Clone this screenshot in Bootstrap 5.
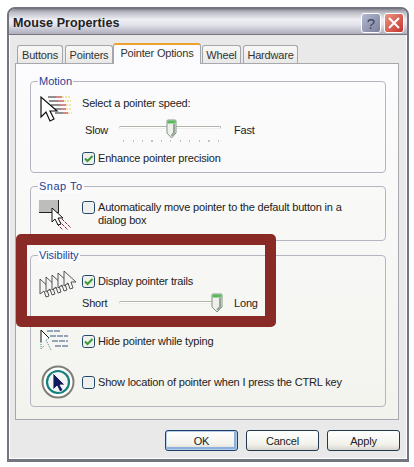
<!DOCTYPE html>
<html lang="en">
<head>
<meta charset="utf-8">
<title>Mouse Properties</title>
<link href="https://cdn.jsdelivr.net/npm/bootstrap@5.3.0/dist/css/bootstrap.min.css" rel="stylesheet">
<style>
html,body{background:#fff;margin:0;height:467px;overflow:hidden}
body{font-family:"Liberation Sans",Arial,sans-serif;font-size:11px;letter-spacing:-.18px;line-height:13px;color:#222;padding:7px 0 0 7px}
.win{position:relative;width:402px;height:455px;border:2px solid #72747e;border-bottom-width:3px;border-radius:8px 8px 0 0;background:#e9e9ea;box-shadow:inset 0 0 0 1px #fff}
.ttl{height:26px;padding:3px 3px 0 4px;background:linear-gradient(#85858f,#b9b9c4 12%,#eeeef3 42%,#e6e6ee 60%,#aeaebe);border-bottom:1px solid #77777f;border-radius:6px 6px 0 0;font-weight:700;font-size:12.5px;letter-spacing:.1px;color:#222}
.tb{width:20px;height:20px;border-radius:3px;border:1px solid #fff;margin-left:3px;display:flex;align-items:center;justify-content:center}
.tb-h{background:linear-gradient(135deg,#b5bad2,#7a7f9c);color:#3f4155;font-size:15px;font-weight:400}
.tb-c{background:linear-gradient(135deg,#e89482,#c9332c)}
.tabsx{height:28px;margin:0 0 0 6px;padding-left:2px;list-style:none}
.tabx{height:18px;padding:3px 0 0;text-align:center;background:linear-gradient(#f8f8f6,#e8e8e6);border:1px solid #a3a6ac;border-bottom:0;border-radius:3px 3px 0 0;margin-right:2px;color:#333}
.tabx-on{height:21px;padding-top:2px;background:#fbfbfd;border-top:2px solid #eba32d;margin-right:1px;position:relative;z-index:1;margin-bottom:-1px}
.pnl{width:384px;height:357px;margin-left:6px;border:1px solid #a6a8ae;padding:17px 0 0 14px;background:linear-gradient(#fcfcfe,#f3f3ee)}
.grp{position:relative;width:356px;border:1px solid #b5b5c2;border-radius:4px;padding-left:8px}
.grp-a{height:92px;padding-top:13px}
.grp-b{height:55px;padding-top:13px;margin-top:13px}
.grp-c{height:152px;padding-top:15px;margin-top:14px}
.lgd{position:absolute;left:7px;top:-7px;background:#fcfcfe;color:#1c3f94;padding:0 1px;letter-spacing:0}
.lgd-w{letter-spacing:.5px}
.ico{width:43px;flex:none;display:block}
.chk{margin:0 3px 0 0!important;width:13px;height:13px;flex:none;border:1px solid #24486c;border-radius:1px;background-color:#eff0ee;float:none}
.chk:checked{background-color:#f0f0ea;border-color:#24486c;background-size:11px;background-image:url("data:image/svg+xml,%3Csvg xmlns='http://www.w3.org/2000/svg' viewBox='0 0 11 11'%3E%3Cpath d='M2 5.5l2.5 2.5 5-5' fill='none' stroke='%233d9a36' stroke-width='2'/%3E%3C/svg%3E")}
.chk:focus{box-shadow:none;border-color:#24486c}
.lbl{margin:0;white-space:nowrap}
.ckr{height:20px}
.lab{width:37px;flex:none}
.lab-s{padding-left:3px}
.sld{position:relative;width:102px;height:20px;flex:none;margin-right:13px}
.trk{position:absolute;left:0;right:0;height:3px;border:1px solid #b4b3ac;border-bottom-color:#eee;border-left-color:#ccc;background:#fff;border-radius:2px}
.trk-a{top:7px}
.trk-c{top:8px}
.thm{position:absolute;top:0;display:block}
.tks{position:absolute;left:4px;top:21px;width:96px;height:2px;background:repeating-linear-gradient(90deg,#c4c4bc 0 1px,transparent 1px 9.5px)}
.ftr{margin:10px 0 0 0;padding-right:7px}
.bt{height:21px;width:73px;padding:0;font-size:11px;letter-spacing:-.18px;line-height:18px;color:#222;border:1px solid #22384f;border-radius:3px;background:linear-gradient(#fff,#f2f2ec 70%,#d8d6ce)}
.bt:hover{color:#222;border-color:#22384f;background:linear-gradient(#fff,#f2f2ec 70%,#d8d6ce)}
.bt-d{box-shadow:inset 0 0 0 1px #b6cde8,inset -1px -1px 0 2px #8fb0dc;border-color:#1d3f6e}
.ring{position:absolute;left:7px;top:225px;width:260px;height:93px;border:11.5px solid #8a2a26;border-radius:5px;pointer-events:none;z-index:3}
</style>
</head>
<body>
<div class="win d-flex flex-column">
  <div class="ttl d-flex align-items-center justify-content-between">
    <span>Mouse Properties</span>
    <div class="d-flex">
      <div class="tb tb-h">?</div>
      <div class="tb tb-c"><svg width="14" height="14" viewBox="0 0 14 14"><path d="M2 2l10 10M12 2L2 12" stroke="#fff" stroke-width="2"/></svg></div>
    </div>
  </div>
  <ul class="tabsx d-flex align-items-end">
    <li class="tabx" style="width:46px">Buttons</li>
    <li class="tabx" style="width:48px;margin-right:0">Pointers</li>
    <li class="tabx tabx-on" style="width:88px">Pointer Options</li>
    <li class="tabx" style="width:39px">Wheel</li>
    <li class="tabx" style="width:55px">Hardware</li>
  </ul>
  <div class="pnl">
    <div class="grp grp-a">
      <span class="lgd">Motion</span>
      <div class="d-flex">
        <svg class="ico" height="30" viewBox="0 0 43 30"><path d="M9 2h8M10 6h9M12 10h9M14 14h8M16 18h8" stroke="#222"/><path d="M17 2h6M19 6h6M21 10h6M22 14h5M24 18h5" stroke="#a8181c"/><path d="M23 2h9M25 6h7M27 10h6M27 14h6M29 18h4" stroke="#e8d24a" stroke-dasharray="2 1"/><path d="M2 2v20l5-5 4 9 4-2-4-8h7z" fill="#fff" stroke="#111" stroke-width="1.2"/></svg>
        <div>
          <div style="height:16px;padding-top:2px">Select a pointer speed:</div>
          <div class="d-flex align-items-start" style="margin-top:8px;height:24px">
            <span class="lab lab-s" style="padding-top:5px">Slow</span>
            <div class="sld" style="height:24px">
              <div class="trk trk-a"></div><div class="tks"></div>
              <svg class="thm" style="left:47px" width="11" height="20" viewBox="0 0 11 20"><path d="M1 2q0-1 1-1h7q1 0 1 1v12l-4.500 5L1 14z" fill="#eef0ea" stroke="#7f9a80"/><path d="M1.500 1.500h8v3h-8z" fill="#5cb85c"/><path d="M8 5v9l-2.500 3" fill="none" stroke="#9aa39a" stroke-width="2"/></svg>
            </div>
            <span style="padding-top:5px">Fast</span>
          </div>
          <div class="ckr d-flex align-items-center" style="margin-top:5px"><input class="form-check-input chk" type="checkbox" checked><span class="lbl">Enhance pointer precision</span></div>
        </div>
      </div>
    </div>
    <div class="grp grp-b">
      <span class="lgd lgd-w">Snap To</span>
      <div class="d-flex">
        <svg class="ico" height="33" viewBox="0 0 43 33"><path d="M0 0h19v12H0z" fill="#bdbdbb"/><path d="M0 12.500h20M19.500 0v13" stroke="#222"/><path d="M20 21l9 9M23 19l9 9M18 24l6 6" stroke="#8a2a3a" stroke-dasharray="3 1"/><path d="M13 8v14l3-3 3 6 3-1-3-6h5z" fill="#fff" stroke="#111"/></svg>
        <div style="padding-top:1px">
          <div class="d-flex align-items-start"><input class="form-check-input chk" type="checkbox"><span class="lbl">Automatically move pointer to the default button in a<br>dialog box</span></div>
        </div>
      </div>
    </div>
    <div class="grp grp-c">
      <span class="lgd">Visibility</span>
      <div class="d-flex">
        <svg class="ico" height="30" viewBox="0 0 43 30"><g fill="#f4f4f4" stroke="#444" stroke-width=".9"><path d="M1 8v15l4-3 2 6 3-1-2-6h5z"/><path d="M7 6v15l4-3 2 6 3-1-2-6h5z"/><path d="M13 4v15l4-3 2 6 3-1-2-6h5z"/><path d="M19 2v15l4-3 2 6 3-1-2-6h5z"/><path d="M25 0v15l4-3 2 6 3-1-2-6h5z"/></g></svg>
        <div>
          <div class="ckr d-flex align-items-center"><input class="form-check-input chk" type="checkbox" checked><span class="lbl">Display pointer trails</span></div>
          <div class="d-flex align-items-center" style="margin-top:2px">
            <span class="lab">Short</span>
            <div class="sld">
              <div class="trk trk-c"></div>
              <svg class="thm" style="left:92px" width="12" height="20" viewBox="0 0 12 20"><path d="M1 2q0-1 1-1h8q1 0 1 1v12l-5 5-5-5z" fill="#eef0ea" stroke="#7f9a80"/><path d="M1.500 1.500h9v3h-9z" fill="#5cb85c"/><path d="M9 5v9l-3 3" fill="none" stroke="#9aa39a" stroke-width="2"/></svg>
            </div>
            <span>Long</span>
          </div>
        </div>
      </div>
      <div class="d-flex" style="margin-top:16px">
        <svg class="ico" height="24" viewBox="0 0 43 24"><path d="M8 2h14M11 7h18M13 12h16M16 17h13" stroke="#34547c" stroke-dasharray="6 1"/><path d="M2 13V1l8 8" fill="#fff" stroke="#111"/><path d="M2 13v7l3-3M10 9l-3 2 3 6 2 4" fill="none" stroke="#3f8f88" stroke-dasharray="1 1"/></svg>
        <div class="ckr d-flex align-items-center" style="margin-top:2px"><input class="form-check-input chk" type="checkbox" checked><span class="lbl">Hide pointer while typing</span></div>
      </div>
      <div class="d-flex" style="margin-top:12px">
        <svg class="ico" height="34" viewBox="0 0 43 34"><circle cx="19" cy="17" r="15.500" fill="#fff" stroke="#807c78" stroke-width="2"/><circle cx="19" cy="17" r="11" fill="#f4f4f4" stroke="#14807c" stroke-width="2.200"/><path d="M14 8v17l4-4 3 6 3-2-3-5h5z" fill="#101a5c" stroke="#fff" stroke-width=".8"/></svg>
        <div class="ckr d-flex align-items-center" style="margin-top:7px"><input class="form-check-input chk" type="checkbox"><span class="lbl">Show location of pointer when I press the CTRL key</span></div>
      </div>
    </div>
  </div>
  <div class="ftr d-flex justify-content-end gap-2">
    <button type="button" class="btn bt bt-d">OK</button>
    <button type="button" class="btn bt">Cancel</button>
    <button type="button" class="btn bt">Apply</button>
  </div>
  <div class="ring"></div>
</div>
<script src="https://cdn.jsdelivr.net/npm/bootstrap@5.3.0/dist/js/bootstrap.bundle.min.js"></script>
</body>
</html>
